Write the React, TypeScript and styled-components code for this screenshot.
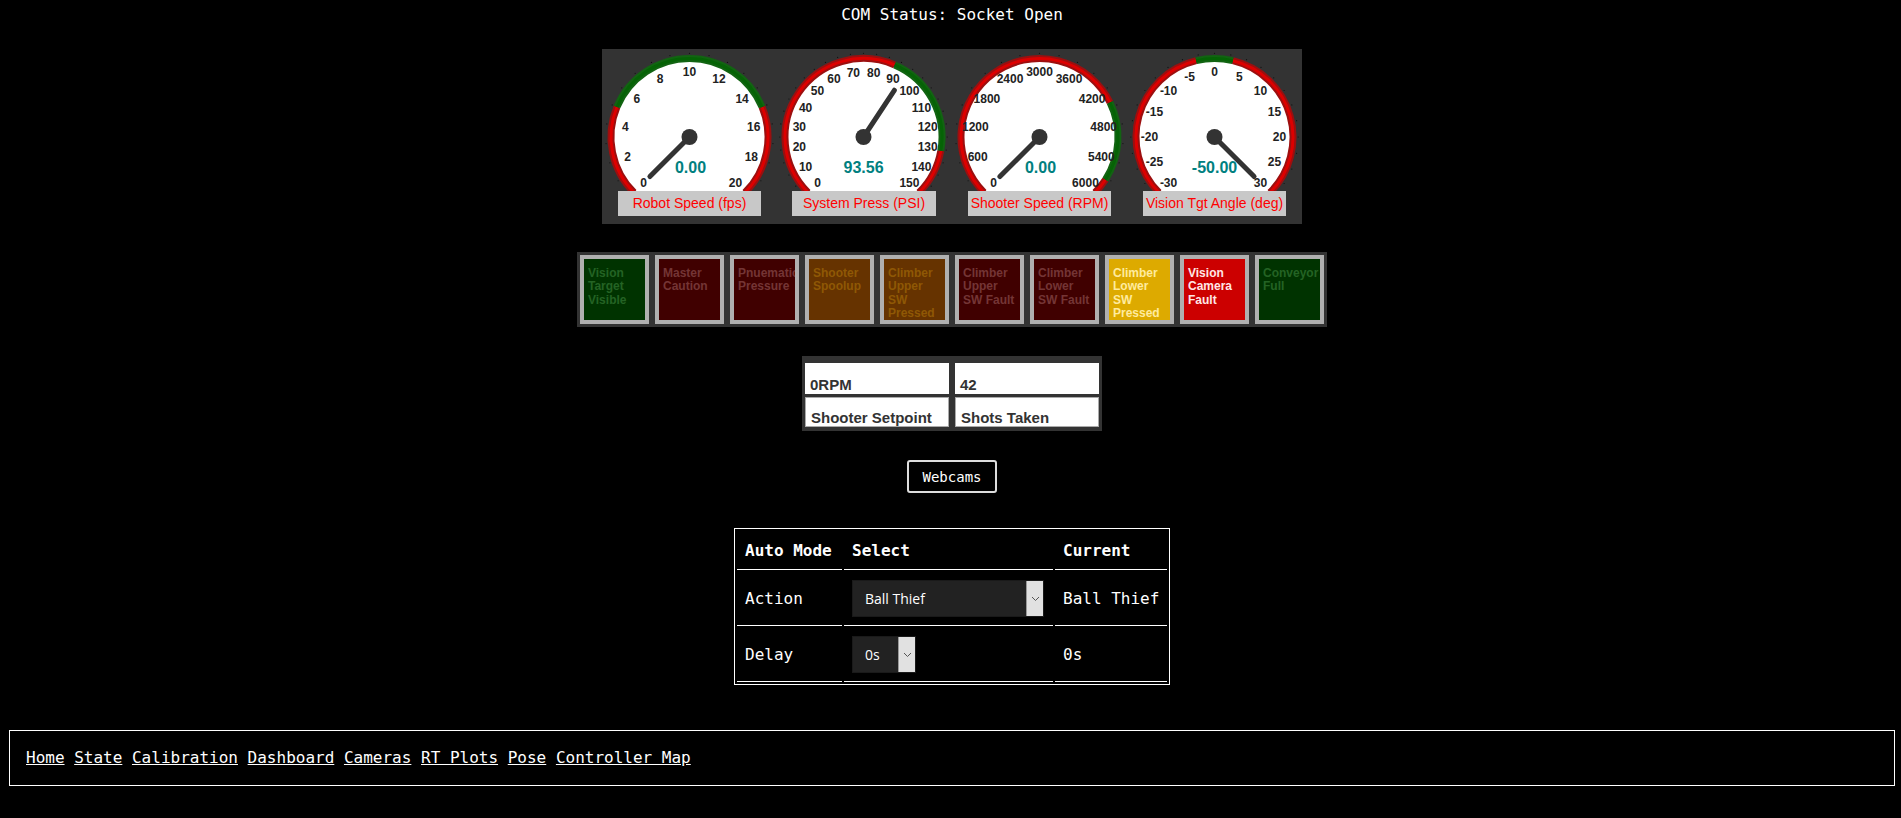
import styled, { createGlobalStyle } from "styled-components";

const MONO = `"DejaVu Sans Mono", monospace`;
const SANS = `"Liberation Sans", Arial, sans-serif`;

const GlobalStyle = createGlobalStyle`
  html, body {
    margin: 0;
    padding: 0;
    background: #000;
    color: #fff;
    font-family: ${MONO};
  }
`;

const Page = styled.div`
  display: flex;
  flex-direction: column;
  align-items: center;
  margin: 0 6px 0 9px;
`;

const Status = styled.div`
  font-size: 16px;
  line-height: 30px;
`;

const GaugePanel = styled.div`
  display: flex;
  width: 700px;
  height: 175px;
  margin-top: 19px;
  background: #333;
`;

const GaugeCell = styled.div`
  position: relative;
  width: 175px;
  height: 175px;
`;

const GaugeLabel = styled.div<{ $wide?: boolean }>`
  position: absolute;
  left: ${({ $wide }) => ($wide ? 15 : 16)}px;
  bottom: 8px;
  width: ${({ $wide }) => ($wide ? 144 : 143)}px;
  height: 25px;
  background: #c8c8c8;
  color: #f00;
  font: 14px/25px ${SANS};
  text-align: center;
  white-space: nowrap;
`;

const TickText = styled.text`
  font: bold 12px ${SANS};
  fill: #222;
  text-anchor: middle;
  dominant-baseline: central;
`;

const ValueText = styled.text`
  font: bold 16px ${SANS};
  fill: #008080;
  text-anchor: middle;
`;

const IndicatorPanel = styled.div`
  display: flex;
  width: 750px;
  height: 75px;
  margin-top: 28px;
  background: #333;
`;

const TONES = {
  green: { bg: "#003300", fg: "#246324" },
  red: { bg: "#400000", fg: "#743535" },
  orange: { bg: "#663300", fg: "#8f5805" },
  amber: { bg: "#ddaa00", fg: "#ffeb9e" },
  alarm: { bg: "#cc0000", fg: "#ffe6e6" },
};

type Tone = keyof typeof TONES;

const Indicator = styled.div<{ $tone: Tone }>`
  box-sizing: border-box;
  width: 69px;
  height: 69px;
  margin: 3px;
  padding: 8px 0 0 4px;
  border: 4px solid #b0b0b0;
  overflow: hidden;
  background: ${({ $tone }) => TONES[$tone].bg};
  color: ${({ $tone }) => TONES[$tone].fg};
  font: bold 12px/13.4px ${SANS};
`;

const IndicatorLine = styled.div`
  white-space: nowrap;
`;

const ValuePanel = styled.div`
  box-sizing: border-box;
  display: grid;
  grid-template-columns: 144px 144px;
  grid-template-rows: 31px 30px;
  column-gap: 6px;
  row-gap: 3px;
  width: 300px;
  height: 75px;
  margin-top: 29px;
  padding: 7px 3px 4px;
  background: #333;
`;

const ValueCell = styled.div`
  display: flex;
  align-items: flex-end;
  padding: 0 0 1px 5px;
  background: #fff;
  color: #333;
  font: bold 15px/17px ${SANS};
`;

const CaptionCell = styled(ValueCell)`
  box-sizing: border-box;
  padding: 0 0 0 5px;
  border: 1px solid #aaa;
`;

const WebcamButton = styled.button`
  box-sizing: border-box;
  width: 90px;
  height: 33px;
  margin-top: 29px;
  padding: 0;
  background: #000;
  border: 2px solid #ddd;
  border-radius: 3px;
  color: #fff;
  font: 14px ${MONO};
`;

const AutoTable = styled.table`
  width: 436px;
  margin-top: 35px;
  table-layout: fixed;
  border: 1px solid #fff;
  border-spacing: 2px;
  font-size: 16px;
`;

const HeadCell = styled.th<{ $width: number }>`
  box-sizing: border-box;
  width: ${({ $width }) => $width}px;
  height: 39px;
  padding: 0 8px;
  border-bottom: 1px solid #fff;
  font-weight: bold;
  text-align: left;
  white-space: nowrap;
`;

const BodyCell = styled.td`
  box-sizing: border-box;
  height: 54px;
  padding: 0 8px;
  border-bottom: 1px solid #fff;
  white-space: nowrap;
`;

const Select = styled.div<{ $width: number }>`
  box-sizing: border-box;
  display: flex;
  justify-content: space-between;
  width: ${({ $width }) => $width}px;
  height: 37px;
  background: #222;
  border: 1px solid #1a1a1a;
  color: #fff;
  font: 14px/35px "Open Sans", sans-serif;
`;

const SelectText = styled.span`
  padding-left: 12px;
`;

const SelectArrow = styled.span`
  box-sizing: border-box;
  display: flex;
  align-items: center;
  justify-content: center;
  width: 17px;
  background: #e1e1e1;
  border: 1px solid #999;
  border-width: 0 0 0 1px;
`;

const NavBar = styled.nav`
  box-sizing: border-box;
  align-self: stretch;
  height: 56px;
  margin-top: 45px;
  padding: 0 16px;
  border: 1px solid #fff;
  font-size: 16px;
  line-height: 54px;
`;

const NavLink = styled.a`
  color: #fff;
  text-decoration: underline;
`;

const START = -135;
const SWEEP = 270;

const polar = (r: number, deg: number) => {
  const a = (deg * Math.PI) / 180;
  return { x: r * Math.sin(a), y: -r * Math.cos(a) };
};

const arc = (r: number, from: number, to: number) => {
  const a = polar(r, from);
  const b = polar(r, to);
  const large = to - from > 180 ? 1 : 0;
  return `M ${a.x} ${a.y} A ${r} ${r} 0 ${large} 1 ${b.x} ${b.y}`;
};

interface GaugeProps {
  label: string;
  min: number;
  max: number;
  step: number;
  value: number;
  greenFrom: number;
  greenTo: number;
  hubX?: number;
  valueX?: number;
  wideLabel?: boolean;
}

function RingBand({ d, dark, bright }: { d: string; dark: string; bright: string }) {
  return (
    <>
      <path d={d} fill="none" stroke={dark} strokeWidth={7} />
      <path d={d} fill="none" stroke={bright} strokeWidth={3} />
    </>
  );
}

function Gauge({ label, min, max, step, value, greenFrom, greenTo, hubX = 87.5, valueX = 1, wideLabel }: GaugeProps) {
  const toDeg = (v: number) => START + ((v - min) / (max - min)) * SWEEP;
  // out of range readings park the needle on the max stop
  const shown = value < min ? max : Math.min(max, value);
  const tip = polar(56, toDeg(shown));
  const ticks: number[] = [];
  for (let v = min; v <= max + step / 2; v += step) ticks.push(v);
  const dots: number[] = [];
  for (let i = 0; i <= (ticks.length - 1) * 2; i++) {
    dots.push(START + (i * SWEEP) / ((ticks.length - 1) * 2));
  }
  const g1 = toDeg(greenFrom);
  const g2 = toDeg(greenTo);

  return (
    <GaugeCell>
      <svg width={175} height={175} viewBox={`${-hubX} -88 175 175`}>
        {dots.map((deg) => {
          const p = polar(83.7, deg);
          return <circle key={deg} cx={p.x} cy={p.y} r={0.6} fill="#111" />;
        })}
        <circle r={76} fill="#fff" />
        <RingBand d={arc(78.5, START, g1)} dark="#9c0f0f" bright="#dd0000" />
        <RingBand d={arc(78.5, g2, START + SWEEP)} dark="#9c0f0f" bright="#dd0000" />
        <RingBand d={arc(78.5, g1, g2)} dark="#126412" bright="#056305" />
        {ticks.map((v) => {
          const p = polar(65, toDeg(v));
          return (
            <TickText key={v} x={p.x} y={p.y}>
              {v}
            </TickText>
          );
        })}
        <line x1={0} y1={0} x2={tip.x} y2={tip.y} stroke="#333" strokeWidth={5} strokeLinecap="round" />
        <circle r={8} fill="#333" />
        <ValueText x={valueX} y={36}>
          {value.toFixed(2)}
        </ValueText>
      </svg>
      <GaugeLabel $wide={wideLabel}>{label}</GaugeLabel>
    </GaugeCell>
  );
}

const GAUGES: GaugeProps[] = [
  { label: "Robot Speed (fps)", min: 0, max: 20, step: 2, value: 0, greenFrom: 5, greenTo: 15 },
  { label: "System Press (PSI)", min: 0, max: 150, step: 10, value: 93.56, greenFrom: 88, greenTo: 130.6, hubX: 86.5, valueX: 0, wideLabel: true },
  { label: "Shooter Speed (RPM)", min: 0, max: 6000, step: 600, value: 0, greenFrom: 4420, greenTo: 5730 },
  { label: "Vision Tgt Angle (deg)", min: -30, max: 30, step: 5, value: -50, greenFrom: -3, greenTo: 3, valueX: 0 },
];

const INDICATORS: { lines: string[]; tone: Tone }[] = [
  { lines: ["Vision", "Target", "Visible"], tone: "green" },
  { lines: ["Master", "Caution"], tone: "red" },
  { lines: ["Pnuematic", "Pressure"], tone: "red" },
  { lines: ["Shooter", "Spoolup"], tone: "orange" },
  { lines: ["Climber", "Upper", "SW", "Pressed"], tone: "orange" },
  { lines: ["Climber", "Upper", "SW Fault"], tone: "red" },
  { lines: ["Climber", "Lower", "SW Fault"], tone: "red" },
  { lines: ["Climber", "Lower", "SW", "Pressed"], tone: "amber" },
  { lines: ["Vision", "Camera", "Fault"], tone: "alarm" },
  { lines: ["Conveyor", "Full"], tone: "green" },
];

const NAV = ["Home", "State", "Calibration", "Dashboard", "Cameras", "RT Plots", "Pose", "Controller Map"];

function Chevron() {
  return (
    <svg width={9} height={6} viewBox="0 0 9 6">
      <path d="M1 1 L4.5 4.5 L8 1" fill="none" stroke="#555" strokeWidth={1} />
    </svg>
  );
}

function FakeSelect({ text, width }: { text: string; width: number }) {
  return (
    <Select $width={width}>
      <SelectText>{text}</SelectText>
      <SelectArrow>
        <Chevron />
      </SelectArrow>
    </Select>
  );
}

export default function App() {
  return (
    <Page>
      <GlobalStyle />
      <Status>COM Status: Socket Open</Status>

      <GaugePanel>
        {GAUGES.map((g) => (
          <Gauge key={g.label} {...g} />
        ))}
      </GaugePanel>

      <IndicatorPanel>
        {INDICATORS.map((ind, i) => (
          <Indicator key={i} $tone={ind.tone}>
            {ind.lines.map((line) => (
              <IndicatorLine key={line}>{line}</IndicatorLine>
            ))}
          </Indicator>
        ))}
      </IndicatorPanel>

      <ValuePanel>
        <ValueCell>0RPM</ValueCell>
        <ValueCell>42</ValueCell>
        <CaptionCell>Shooter Setpoint</CaptionCell>
        <CaptionCell>Shots Taken</CaptionCell>
      </ValuePanel>

      <WebcamButton>Webcams</WebcamButton>

      <AutoTable>
        <thead>
          <tr>
            <HeadCell $width={105}>Auto Mode</HeadCell>
            <HeadCell $width={209}>Select</HeadCell>
            <HeadCell $width={112}>Current</HeadCell>
          </tr>
        </thead>
        <tbody>
          <tr>
            <BodyCell>Action</BodyCell>
            <BodyCell>
              <FakeSelect text="Ball Thief" width={192} />
            </BodyCell>
            <BodyCell>Ball Thief</BodyCell>
          </tr>
          <tr>
            <BodyCell>Delay</BodyCell>
            <BodyCell>
              <FakeSelect text="0s" width={64} />
            </BodyCell>
            <BodyCell>0s</BodyCell>
          </tr>
        </tbody>
      </AutoTable>

      <NavBar>
        {NAV.map((item) => (
          <span key={item}>
            <NavLink href="#">{item}</NavLink>{" "}
          </span>
        ))}
      </NavBar>
    </Page>
  );
}
